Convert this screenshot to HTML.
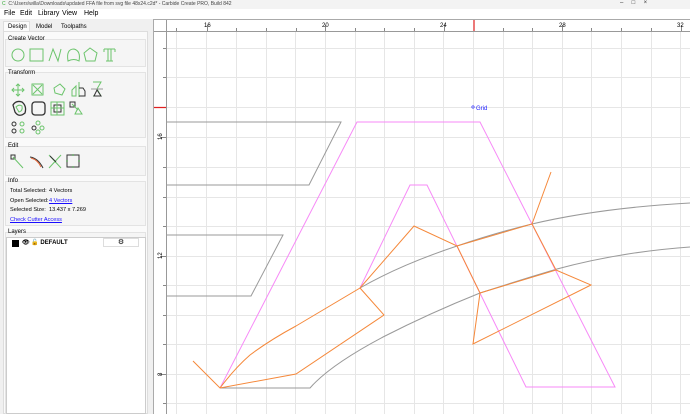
<!DOCTYPE html>
<html><head><meta charset="utf-8"><style>
*{margin:0;padding:0;box-sizing:border-box}
body{width:690px;height:414px;overflow:hidden;background:#f0f0f0;font-family:"Liberation Sans",sans-serif;position:relative;font-size:6px;color:#000}
.abs{position:absolute}
.grp{position:absolute;left:5px;width:141px;border:1px solid #e3e3e3;background:#f5f5f5}
.lbl{position:absolute;left:8px;font-size:6px}
a{color:#1a0dff;text-decoration:underline}
.m{position:absolute;top:10px;font-size:7px}
</style></head><body>
<div class="abs" style="left:0;top:0;width:690px;height:9px;background:#f3f3f3"></div>
<div class="abs" style="left:2px;top:1px;font-size:5px;color:#444"><span style="color:#3a3">C</span>&nbsp; C:\Users\willa\Downloads\updated FFA file from svg file 48x24.c2d* - Carbide Create PRO, Build 842</div>
<div class="abs" style="left:620px;top:0;font-size:6px;color:#333">&#8211;&nbsp;&nbsp;&nbsp;&nbsp;&nbsp;&#9633;&nbsp;&nbsp;&nbsp;&nbsp;&nbsp;&#215;</div>
<div class="abs" style="left:0;top:9px;width:690px;height:10px;background:#fff"></div>
<span class="m" style="left:4px">File</span><span class="m" style="left:20px">Edit</span><span class="m" style="left:38px">Library</span><span class="m" style="left:62px">View</span><span class="m" style="left:84px">Help</span>
<!-- tabs -->
<div class="abs" style="left:3px;top:21px;width:27px;height:11px;background:#fbfbfb;border:1px solid #ddd;border-bottom:none"></div>
<div class="abs" style="left:8px;top:24px;font-size:6px">Design</div>
<div class="abs" style="left:36px;top:24px;font-size:6px">Model</div>
<div class="abs" style="left:61px;top:24px;font-size:6px">Toolpaths</div>
<div class="abs" style="left:3px;top:31px;width:145px;height:383px;background:#fafafa;border:1px solid #ddd"></div>
<div class="grp" style="top:39px;height:28px"></div>
<div class="lbl" style="top:36px">Create Vector</div>
<div class="grp" style="top:72px;height:66px"></div>
<div class="lbl" style="top:70px">Transform</div>
<div class="grp" style="top:146px;height:30px"></div>
<div class="lbl" style="top:143px">Edit</div>
<div class="grp" style="top:181px;height:45px"></div>
<div class="lbl" style="top:178px">Info</div>
<div class="abs" style="left:10px;top:187px;line-height:9.5px;font-size:5.6px">Total Selected:<br>Open Selected:<br>Selected Size:<br><a>Check Cutter Access</a></div>
<div class="abs" style="left:49px;top:187px;line-height:9.5px;font-size:5.6px">4 Vectors<br><a>4 Vectors</a><br>13.437 x 7.269</div>
<div class="grp" style="top:232px;height:182px"></div>
<div class="lbl" style="top:229px">Layers</div>
<div class="abs" style="left:6px;top:237px;width:140px;height:177px;background:#fff;border:1px solid #ccc"></div>
<div class="abs" style="left:12px;top:240px;width:7px;height:7px;background:#000"></div>
<div class="abs" style="left:22px;top:239px;font-size:6px;font-weight:bold">👁 🔓 DEFAULT</div>
<div class="abs" style="left:103px;top:238px;width:36px;height:9px;background:#fff;border:1px solid #ddd;font-size:7px;text-align:center;line-height:8px">⚙</div>
<!-- icons -->
<svg class="abs" style="left:0;top:0" width="150" height="180" fill="none" stroke="#6cc46c" stroke-width="1">
<circle cx="18" cy="55" r="6"/><rect x="30" y="49" width="13" height="12"/>
<path d="M49 61 L53 49 L58 61 L61 49"/><path d="M68 61 Q66 49 74 49 Q81 51 79 61 Q74 58 68 61Z"/>
<path d="M90 48 L97 53 L95 61 L86 61 L84 53Z"/><path d="M104 49 H115 M104 49 V52 M115 49 V52 M108 49 V61 M111 49 V61 M106 61 H113"/>
<path d="M18 84 V96 M12 90 H24 M16 86 L18 84 L20 86 M16 94 L18 96 L20 94 M14 88 L12 90 L14 92 M22 88 L24 90 L22 92"/>
<rect x="32" y="84" width="11" height="11"/><path d="M33 85 L42 94 M42 85 L33 94"/>
<path d="M54 88 L60 84 L65 89 L62 95 L55 93Z"/>
<path d="M72 96 V90 L76 86 V96Z M79 82 V97"/><path d="M79 88 H83 L85 91 V96 H79" stroke="#333"/>
<path d="M93 82 H101 L97 89 L101 96 H93"/><path d="M91 89 H103" stroke="#999"/><path d="M94 96 L97 90 L101 96Z" stroke="#333"/>
<path d="M13 105 Q16 100 22 102 Q27 106 25 113 Q19 118 15 112Z" stroke="#333" stroke-width="1.3"/><path d="M16 107 Q19 104 22 106 Q23 111 19 112Z"/>
<rect x="32" y="102" width="13" height="13" rx="3" stroke="#333" stroke-width="1.3"/>
<rect x="51" y="102" width="13" height="13"/><rect x="54" y="105" width="7" height="7" stroke="#333"/><path d="M57 102 V115 M51 108 H64"/>
<rect x="70" y="102" width="5" height="5" stroke="#333"/><path d="M72 104 L78 110"/><path d="M78 108 L75 114 H82Z"/>
<circle cx="14" cy="124" r="2" stroke="#333"/><circle cx="22" cy="124" r="2"/><circle cx="14" cy="131" r="2" stroke="#333"/><circle cx="22" cy="131" r="2"/>
<circle cx="38" cy="123" r="2"/><circle cx="34" cy="128" r="2" stroke="#333"/><circle cx="42" cy="128" r="2"/><circle cx="38" cy="132" r="2"/>
<rect x="11" y="155" width="4" height="4" stroke="#333"/><path d="M13 157 L23 168"/>
<path d="M30 157 Q38 158 43 168" stroke="#333"/><path d="M31 158 Q38 160 41 167" stroke="#e86b3c"/>
<path d="M49 155 L61 168 M61 155 L49 168"/><path d="M50 156 L56 162" stroke="#333"/>
<rect x="67" y="155" width="12" height="12" stroke="#333"/><path d="M73 154 V156 M73 166 V168 M66 161 H68 M78 161 H80"/>
</svg>
<!-- canvas -->
<div class="abs" style="left:153px;top:19px;width:537px;height:395px;background:#fff;border-left:1px solid #aaa;border-top:1px solid #aaa"></div>
<svg class="abs" style="left:0;top:0" width="690" height="414">
<g stroke="#e6e6e6" stroke-width="1">
<path d="M176.5 31V414M206.5 31V414M236.5 31V414M266.5 31V414M295.5 31V414M325.5 31V414M355.5 31V414M384.5 31V414M414.5 31V414M443.5 31V414M473.5 31V414M503.5 31V414M532.5 31V414M562.5 31V414M591.5 31V414M621.5 31V414M651.5 31V414M680.5 31V414"/>
<path d="M166 48.5H690M166 77.5H690M166 107.5H690M166 137.5H690M166 167.5H690M166 197.5H690M166 226.5H690M166 256.5H690M166 285.5H690M166 315.5H690M166 344.5H690M166 374.5H690M166 403.5H690"/>
</g>
<path d="M166 31.5H690M166.5 20V414M154 31.5H166" stroke="#999"/>
<g stroke="#888"><path d="M176.5 31v-3M207.5 31v-6M236.5 31v-3M266.5 31v-3M296.5 31v-3M325.5 31v-6M355.5 31v-3M384.5 31v-3M414.5 31v-3M444.5 31v-6M503.5 31v-3M532.5 31v-3M562.5 31v-6M591.5 31v-3M621.5 31v-3M651.5 31v-3M681.5 31v-6"/>
<path d="M166 48.5h-3M166 77.5h-3M166 137.5h-6M166 167.5h-3M166 197.5h-3M166 226.5h-3M166 256.5h-6M166 285.5h-3M166 315.5h-3M166 344.5h-3M166 374.5h-6M166 403.5h-3"/></g>
<path d="M474 20V31M154 107.5H166" stroke="#e02020" stroke-width="1.2"/>
<g font-size="6" font-family="Liberation Sans" fill="#000">
<text x="204" y="27">16</text><text x="322" y="27">20</text><text x="440" y="27">24</text><text x="559" y="27">28</text><text x="677" y="27">32</text>
<text transform="translate(162,140) rotate(-90)">16</text><text transform="translate(162,259) rotate(-90)">12</text><text transform="translate(162,376) rotate(-90)">8</text>
<text x="476" y="110" fill="#2020ff">Grid</text></g>
<circle cx="473" cy="107" r="1.2" fill="none" stroke="#2020ff" stroke-width="0.6"/>
<g fill="none" stroke="#9a9a9a" stroke-width="1">
<path d="M166 122H341L309 185H166"/><path d="M166 235H283L251 296H166"/>
<path d="M220 388H310Q330 365 383 337Q430 313 480 293Q520 280 557 269Q620 252 690 247"/>
<path d="M360 288Q400 265 457 246Q495 233 532 224Q600 208 690 203"/>
</g>
<g fill="none" stroke="#f78af7" stroke-width="1">
<path d="M220 388L357 122H480L615 387H526L427 185H410L360 288"/>
</g>
<g fill="none" stroke="#f5883a" stroke-width="1">
<path d="M193 361L220 388L296 374L384 315L360 288"/>
<path d="M220 388Q235 368 250 355Q270 340 296 326L360 288L414 226L457 246L532 224L551 172"/>
<path d="M532 224L556 270"/>
<path d="M457 246L480 293L556 270L591 285L473 344L480 293"/>
</g>
</svg>
</body></html>
